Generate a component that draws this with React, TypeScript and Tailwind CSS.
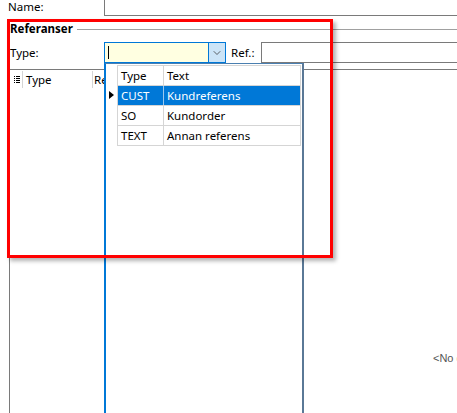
import { ChevronDown } from 'lucide-react';

const font = { fontFamily: '"Noto Sans", "Open Sans", sans-serif' };

const rows = [
  { type: 'CUST', text: 'Kundreferens', selected: true },
  { type: 'SO', text: 'Kundorder', selected: false },
  { type: 'TEXT', text: 'Annan referens', selected: false },
];

export default function App() {
  return (
    <div
      className="relative w-[457px] h-[413px] overflow-hidden bg-white text-[11.5px] text-black leading-none"
      style={font}
    >
      {/* Name row */}
      <div className="flex h-[16px]">
        <div className="w-[104px] pl-[8px] pt-[1px]">Name:</div>
        <div className="flex-1 border-l border-b border-[#7a7a7a]" />
      </div>

      {/* Group header */}
      <div className="flex items-center mt-[7px] pl-[10px] h-[12px]">
        <span className="font-bold">Referanser</span>
        <div className="flex-1 ml-[4px] h-px bg-[#a0a0a0]" />
      </div>

      {/* Type / Ref row */}
      <div className="flex items-center mt-[7px] h-[21px]">
        <div className="w-[104px] pl-[10px]">Type:</div>
        <div className="flex w-[122px] h-[21px] border border-[#0078d7] bg-[#ffffe1]">
          <div className="flex-1 flex items-center pl-[3px]">
            <div className="w-px h-[13px] bg-black" />
          </div>
          <div className="w-[17px] flex items-center justify-center bg-[#cce4f7] border-l border-[#0078d7]">
            <ChevronDown size={12} strokeWidth={1.5} className="text-[#333]" />
          </div>
        </div>
        <div className="w-[35px] pl-[5px]">Ref.:</div>
        <div className="flex-1 h-[21px] border border-r-0 border-[#7a7a7a]" />
      </div>

      {/* Grid */}
      <div className="ml-[9px] mt-[6px] border-l border-t border-[#7a7a7a] h-[400px]">
        <div className="flex h-[19px] items-center">
          <div className="w-[11px] flex flex-col items-center gap-[1px] pl-[2px]">
            {[0, 1, 2, 3].map((i) => (
              <div key={i} className="flex gap-[1px]">
                <div className="w-px h-px bg-black" />
                <div className="w-[4px] h-px bg-black" />
              </div>
            ))}
          </div>
          <div className="w-px h-[17px] bg-[#d5d5d5] ml-[1px]" />
          <div className="w-[69px] pl-[3px]">Type</div>
          <div className="w-px h-[17px] bg-[#d5d5d5]" />
          <div className="pl-[1px]">Ref</div>
        </div>
        <div className="pl-[423px] pt-[264px] text-[11px] text-[#555]" style={{ fontFamily: '"Liberation Sans", Arial, sans-serif' }}>
          <span className="whitespace-nowrap">&lt;No data to display&gt;</span>
        </div>
      </div>

      {/* Dropdown popup */}
      <div className="absolute left-[104px] top-[63px] w-[200px] h-[360px] bg-white border-l-2 border-[#0078d7] border-r-2 border-r-[#5a7896] border-t border-t-[#4a7fb0]">
        <div className="flex mt-[1px]">
          <div className="w-[11px] flex flex-col">
            <div className="h-[20px]" />
            <div className="h-[20px] flex items-center justify-center">
              <div className="w-0 h-0 border-y-[4px] border-y-transparent border-l-[5px] border-l-black" />
            </div>
          </div>
          <div className="w-[184px] border-l border-t border-[#d5d5d5]">
            <div className="flex h-[20px] border-b border-[#d5d5d5]">
              <div className="w-[46px] pl-[3px] flex items-center border-r border-[#d5d5d5]">Type</div>
              <div className="flex-1 pl-[3px] flex items-center border-r border-[#d5d5d5]">Text</div>
            </div>
            {rows.map((r) => (
              <div
                key={r.type}
                className={
                  r.selected
                    ? 'flex h-[20px] bg-[#0078d7] text-white border-b border-[#d5d5d5]'
                    : 'flex h-[20px] border-b border-[#d5d5d5]'
                }
              >
                <div className={r.selected ? 'w-[46px] pl-[3px] flex items-center border-r border-[#9cc8ee]' : 'w-[46px] pl-[3px] flex items-center border-r border-[#d5d5d5]'}>
                  {r.type}
                </div>
                <div className="flex-1 pl-[3px] flex items-center border-r border-[#d5d5d5]">{r.text}</div>
              </div>
            ))}
          </div>
        </div>
      </div>

      {/* Red highlight */}
      <div className="absolute left-[7px] top-[19px] w-[326px] h-[239px] border-[3px] border-[#ff0000] shadow-[3px_3px_4px_rgba(0,0,0,0.3)] pointer-events-none" />
    </div>
  );
}
